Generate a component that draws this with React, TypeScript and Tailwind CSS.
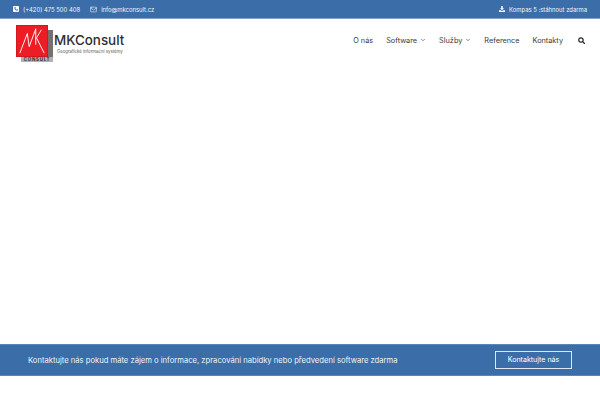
import { ChevronDown, Mail } from 'lucide-react'

const font = "font-['Inter','Roboto',sans-serif]"

function PhoneSquare() {
  return (
    <svg viewBox="0 0 12 12" className="w-[6px] h-[6px] mr-[4px]">
      <rect width="12" height="12" rx="2" fill="#fff" />
      <path d="M3.2 2.6 L4.8 2.2 L5.6 4.2 L4.7 5 Q5.4 6.6 7 7.3 L7.8 6.4 L9.8 7.2 L9.4 8.8 Q9.2 9.5 8.4 9.5 Q3 9 2.5 3.6 Q2.5 2.8 3.2 2.6 Z" fill="#3b6ea8" />
    </svg>
  )
}

function DownloadSolid() {
  return (
    <svg viewBox="0 0 12 12" className="w-[6px] h-[6px] mr-[4px]" fill="#fff">
      <path d="M4.5 0 H7.5 V4.5 H10 L6 8.5 L2 4.5 H4.5 Z" />
      <path d="M0 8.5 H3.5 L6 10.5 L8.5 8.5 H12 V12 H0 Z" />
    </svg>
  )
}

function SearchSolid() {
  return (
    <svg viewBox="0 0 14 14" className="w-[7px] h-[7px] ml-[2px]" fill="none" stroke="#222" strokeWidth="2.4">
      <circle cx="6" cy="6" r="4.4" />
      <path d="M9.3 9.3 L13 13" strokeLinecap="round" />
    </svg>
  )
}

function Logo() {
  return (
    <div className="flex items-start">
      <div className="relative w-[37px] h-[37px]">
        <div className="absolute left-[5px] top-[5px] w-[32px] h-[27px] bg-[#77706f]" />
        <div className="absolute left-0 top-0 w-[32px] h-[32px] bg-[#ee1c25] border border-[#d01820]">
          <svg viewBox="0 0 32 32" className="w-full h-full" fill="none" stroke="#fff" strokeWidth="1">
            <path d="M3 29 L11 8 L13 22 L20 3 L20 20 M20 14 L26 4 M21 13 L29 29" />
          </svg>
        </div>
        <div className="absolute left-[5px] top-[32px] w-[32px] h-[5px] overflow-hidden text-center text-[4.5px] leading-[5px] font-bold tracking-[0.7px] text-[#333] bg-[#b5b0af]">
          CONSULT
        </div>
      </div>
      <div className="ml-[1px] mt-[7px]">
        <div className="text-[13.4px] leading-[17px] font-medium text-[#2e2e33]">MKConsult</div>
        <div className="ml-[3px] text-[4.3px] leading-[6px] text-[#555]">Geografické informační systémy</div>
      </div>
    </div>
  )
}

function NavItem({ label, caret }: { label: string; caret?: boolean }) {
  return (
    <a className="flex items-center gap-[3px] text-[7.3px] leading-[12px] text-[#3a3a3a]">
      <span className="pt-[1px]">{label}</span>
      {caret && <ChevronDown size={6} strokeWidth={2.5} className="text-[#444]" />}
    </a>
  )
}

export default function App() {
  return (
    <div className={`w-[600px] h-[400px] bg-white flex flex-col overflow-hidden ${font}`}>
      {/* Top bar */}
      <div className="h-[19px] pt-[1px] bg-[#3b6ea8] border-b border-[#7fa3cc] flex items-center justify-between pl-[13px] pr-[13px] text-[5.9px] text-[#f0f4f9]">
        <div className="flex items-center">
          <PhoneSquare />
          <span className="pt-[1px]">(+420) 475 500 408</span>
          <Mail size={7} className="ml-[10px] mr-[4px]" />
          <span className="pt-[1px]">info@mkconsult.cz</span>
        </div>
        <div className="flex items-center">
          <DownloadSolid />
          <span className="pt-[1px]">Kompas 5 :stáhnout zdarma</span>
        </div>
      </div>

      {/* Header */}
      <div className="h-[41px] flex items-center justify-between pl-[16px] pr-[15px]">
        <div className="mt-[8px]">
          <Logo />
        </div>
        <nav className="flex items-center gap-[13px] pt-[1px]">
          <NavItem label="O nás" />
          <NavItem label="Software" caret />
          <NavItem label="Služby" caret />
          <NavItem label="Reference" />
          <NavItem label="Kontakty" />
          <SearchSolid />
        </nav>
      </div>

      <div className="h-[284px]" />

      {/* CTA */}
      <div className="h-[32px] bg-[#3b6ea8] border-y border-[#5a86b8] flex items-center justify-between pl-[28px] pr-[28px]">
        <span className="pt-[1px] text-[7.63px] text-[#eef3f8]">
          Kontaktujte nás pokud máte zájem o informace, zpracování nabídky nebo předvedení software zdarma
        </span>
        <a className="w-[77px] h-[18px] border border-[#dfe8f2] flex items-center justify-center text-[7.1px] text-white">
          Kontaktujte nás
        </a>
      </div>
    </div>
  )
}
